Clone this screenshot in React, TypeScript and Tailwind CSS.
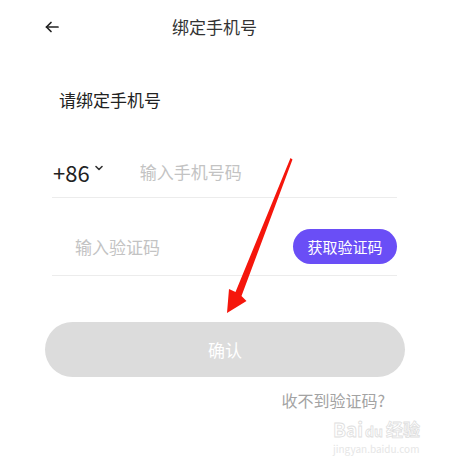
import React from 'react';

const font = { fontFamily: '"Noto Sans CJK SC", "Noto Sans", sans-serif' };

const BackArrow = () => (
  <svg width="14" height="12" viewBox="0 0 14 12" fill="none" stroke="#222" strokeWidth="1.7" strokeLinecap="round" strokeLinejoin="round">
    <path d="M1.5 6 H13" />
    <path d="M6 1.5 L1.5 6 L6 10.5" />
  </svg>
);

const Chevron = () => (
  <svg width="8" height="6" viewBox="0 0 8 6" fill="none" stroke="#333" strokeWidth="1.6" strokeLinecap="round" strokeLinejoin="round">
    <path d="M1 1.5 L4 4.5 L7 1.5" />
  </svg>
);

const stroke = { WebkitTextStroke: '0.8px #dedede' };

const App: React.FC = () => {
  return (
    <div className="relative w-[449px] h-[464px] bg-white overflow-hidden" style={font}>
      {/* HEADER */}
      <div className="flex items-center h-[54px]">
        <div className="ml-[45px] flex items-center">
          <BackArrow />
        </div>
        <h1 className="ml-[113px] text-[17px] leading-6 text-[#333]">绑定手机号</h1>
      </div>

      <p className="mt-[34px] ml-[59px] text-[17px] leading-6 text-[#222]">请绑定手机号</p>

      {/* FORM */}
      <div className="mx-[52px] mt-[34px]">
        <div className="flex items-center h-[52px] border-b border-[#ececec]">
          <span className="text-[22px] leading-none text-[#222] ml-[1px]">+86</span>
          <span className="ml-[5px] -mt-[8px]"><Chevron /></span>
          <span className="ml-[37px] text-[17px] text-[#c3c3c3]">输入手机号码</span>
        </div>
        <div className="flex items-center justify-between h-[78px] pt-[20px] border-b border-[#ececec]">
          <span className="ml-[23px] text-[17px] text-[#c3c3c3]">输入验证码</span>
          <button className="h-[35px] w-[104px] rounded-full bg-[#6a4ef6] text-white text-[15px] leading-none">
            获取验证码
          </button>
        </div>
      </div>

      <button className="mt-[46px] ml-[45px] w-[360px] h-[55px] rounded-full bg-[#dcdcdc] text-white text-[17px] block">
        确认
      </button>

      <p className="mt-[11px] mr-[64px] text-right text-[16px] leading-6 text-[#a3a3a3]">收不到验证码?</p>

      {/* WATERMARK */}
      <div className="absolute left-[333px] top-[418px] flex flex-col items-start select-none">
        <div className="flex items-end h-[22px]">
          <span className="text-[19px] leading-[22px] font-bold text-white" style={stroke}>Bai</span>
          <span className="ml-[2px] text-[14px] leading-[18px] font-bold text-white" style={stroke}>du</span>
          <span className="ml-[3px] text-[17px] leading-[22px] font-bold text-white" style={stroke}>经验</span>
        </div>
        <span className="mt-[3px] text-[10px] leading-[12px] text-[#e6e6e6]">jingyan.baidu.com</span>
      </div>

      {/* RED ANNOTATION ARROW */}
      <svg className="absolute inset-0 pointer-events-none" width="449" height="464" viewBox="0 0 449 464">
        <polygon
          points="290.5,158 292.5,159.5 241.5,296 246.5,301 227,313 229,289 235.5,292"
          fill="#f5160c"
        />
      </svg>
    </div>
  );
};

export default App;
